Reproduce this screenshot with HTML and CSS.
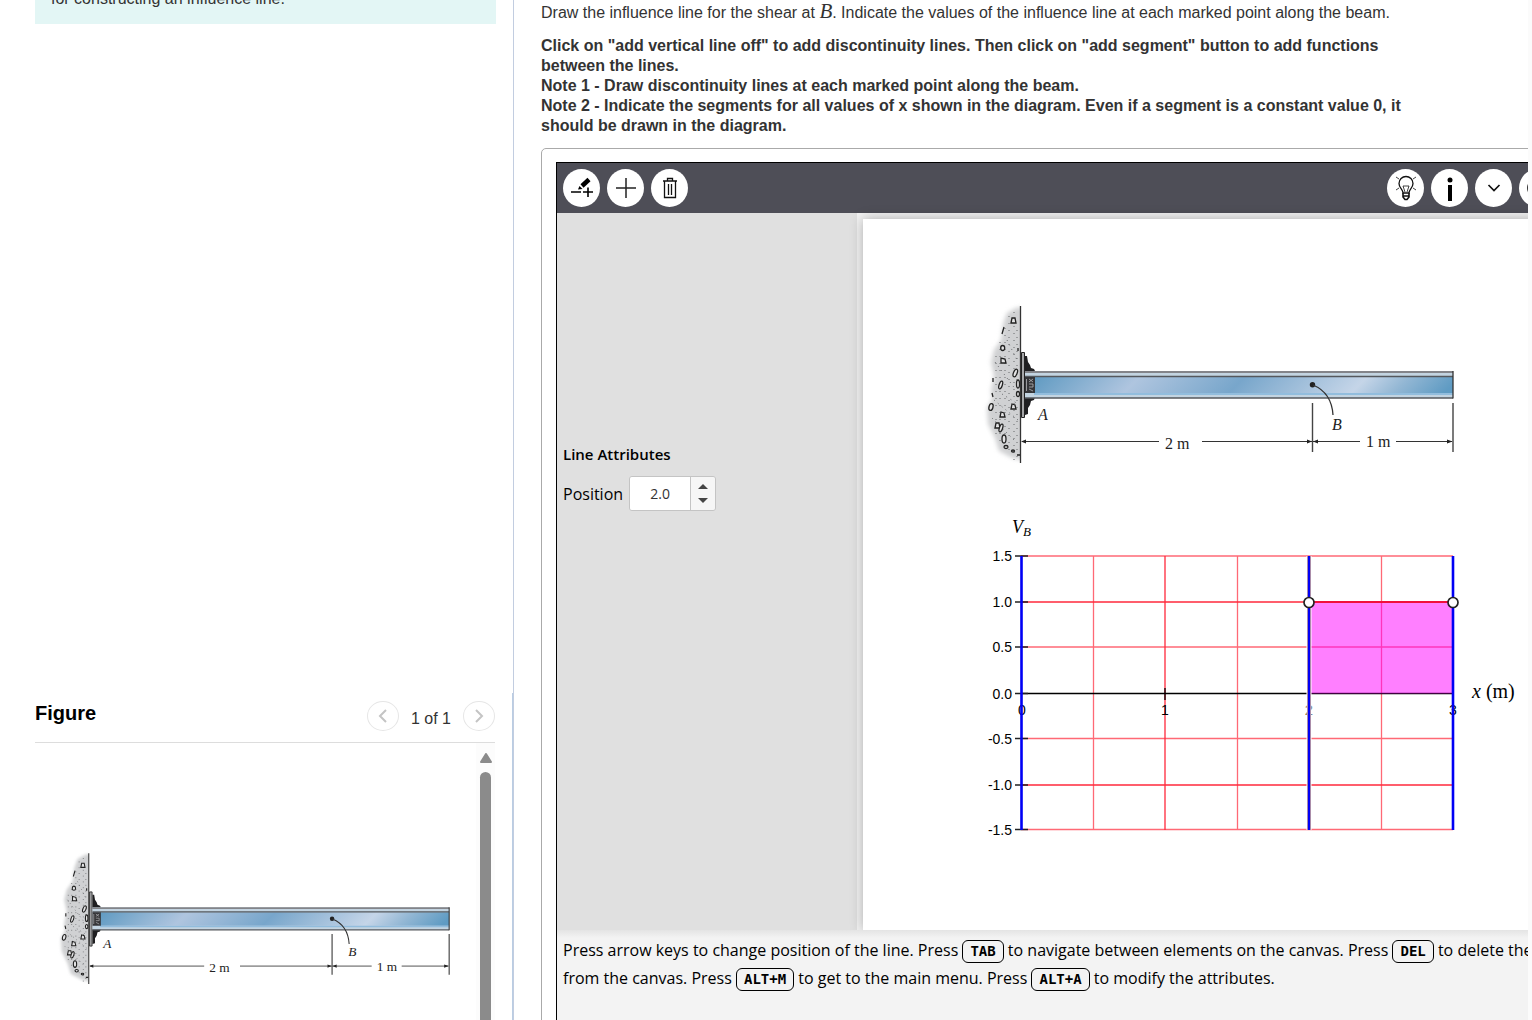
FILE: index.html
```html
<!DOCTYPE html>
<html lang="en">
<head>
    <meta charset="UTF-8">
    <title>Influence Lines</title>
    <link rel="stylesheet" href="styles.css">
</head>
<body>
    <!-- shared drawing of the beam, used in the figure and on the canvas -->
    <svg class="defs" width="0" height="0" aria-hidden="true">
        <defs>
            <linearGradient id="steel" gradientUnits="userSpaceOnUse" x1="50" y1="85" x2="261" y2="296">
                <stop offset="0" stop-color="#639cc3"/>
                <stop offset="0.24" stop-color="#afc5df"/>
                <stop offset="0.49" stop-color="#78a6cb"/>
                <stop offset="0.78" stop-color="#c5d5e8"/>
                <stop offset="0.88" stop-color="#93b7d4"/>
                <stop offset="1" stop-color="#5f9bc3"/>
            </linearGradient>
            <filter id="soft" x="-20%" y="-10%" width="140%" height="120%">
                <feGaussianBlur stdDeviation="2"/>
            </filter>
            <clipPath id="wallClip"><path d="M0 0H40V170H0Z"/></clipPath>
            <symbol id="beam" viewBox="0 0 480 170">
                <g clip-path="url(#wallClip)">
                    <path filter="url(#soft)" fill="#d0d1d3" d="M50 6 L36 8 L27 13 L23 24 L21 40 L14 50 L11 62 L14 76 L11 90 L12 99 L7 108 L8 124 L15 138 L19 151 L32 158 L50 162Z"/>
                </g>
                <g fill="none" stroke="#66686b" stroke-width="1" stroke-dasharray="1 6">
                    <path d="M34 12V160M29 16V155M37 30V158M25 28V152M20 42V146M16 56V138"/>
                    <path d="M27 40L38 62M15 62L36 90M14 100L38 120M12 118L34 140M22 94L38 104" stroke-dasharray="1 4"/>
                </g>
                <g fill="#e4e4e5" stroke="#222" stroke-width="1.3">
                    <path d="M31 23L32 18L35 18L36 23ZM21 63L21 58L25 59L26 63ZM31 109L32 104L35 105L36 109ZM20 117L21 112L24 113L25 117ZM15 128L16 123L19 123L20 128Z"/>
                    <ellipse cx="22.700" cy="48" rx="2" ry="2.500"/>
                    <ellipse cx="35.300" cy="73" rx="1.800" ry="4" transform="rotate(22 35.300 73)"/>
                    <ellipse cx="20.700" cy="85" rx="1.600" ry="4" transform="rotate(18 20.700 85)"/>
                    <ellipse cx="38" cy="84" rx="1.500" ry="4"/>
                    <ellipse cx="38" cy="94" rx="1.500" ry="2.500"/>
                    <ellipse cx="11" cy="107" rx="2" ry="3.500" transform="rotate(14 11 107)"/>
                    <ellipse cx="21" cy="128" rx="1.600" ry="4" transform="rotate(18 21 128)"/>
                    <ellipse cx="24" cy="139" rx="2" ry="4"/>
                    <ellipse cx="26" cy="147" rx="2" ry="1.500"/>
                    <ellipse cx="33" cy="151" rx="1.500" ry="1"/>
                    <path d="M24 27L22 34M13 78V82M12 93L13 97M38 48V51M37 155H40"/>
                </g>
                <path d="M40.500 6V163" stroke="#333" stroke-width="1.300"/>
                <path d="M41.500 52.500H44.500V117.500H41.500Z" fill="#a5a6a8" stroke="#222"/>
                <path fill="#1f1f21" d="M45 56L47 56L48 62L50 65L51 68L54 69L56 73H45ZM45 97H55L54 100L51 101L50 105L48 108L48 114L45 115Z"/>
                <path d="M45 71H473V98H45Z" fill="#c3d4e1"/>
                <path d="M54 77H473V93H54Z" fill="url(#steel)"/>
                <path d="M54 93H473V95H54Z" fill="#92bddd"/>
                <path d="M45 72H473" stroke="#838489" stroke-width="2"/>
                <path d="M45 76.500H473M45 98H473" stroke="#55585d" stroke-width="1.500"/>
                <path d="M473 71V98.500" stroke="#333" stroke-width="1.300"/>
                <path d="M45 77H55V93H45Z" fill="#353538"/>
                <path d="M49 79L53 82M53 79L49 82M49 84H53V87H49M49 89L53 91M46.500 79V91" stroke="#b5b5b8" stroke-width="0.800" fill="none"/>
                <circle cx="332.500" cy="84.700" r="2.700" fill="#222"/>
                <path d="M333 85C345 90 352 99 353 115" fill="none" stroke="#333" stroke-width="1.300"/>
                <path d="M332.500 103V152M473 103V152" stroke="#444" stroke-width="1.400"/>
                <path d="M42 141.500H179M222 141.500H332M333 141.500H380M416 141.500H472" stroke="#333"/>
                <path fill="#222" d="M41 141.500L46 139.500V143.500ZM332 141.500L327 139.500V143.500ZM333 141.500L338 139.500V143.500ZM472.500 141.500L467 139.500V143.500Z"/>
            </symbol>
        </defs>
    </svg>

    <aside class="left">
        <div class="hint">for constructing an influence line.</div>
        <section class="figure">
            <header class="figure-head">
                <h2>Figure</h2>
                <nav class="pager">
                    <button type="button" aria-label="Previous figure"><svg width="10" height="14" viewBox="0 0 10 14"><path d="M8 1L2 7L8 13"/></svg></button>
                    <span>1 of 1</span>
                    <button type="button" aria-label="Next figure"><svg width="10" height="14" viewBox="0 0 10 14"><path d="M2 1L8 7L2 13"/></svg></button>
                </nav>
            </header>
            <div class="figure-body">
                <svg class="beam-small" viewBox="0 0 480 170">
                    <use href="#beam" width="480" height="170"/>
                    <g class="beam-text">
                        <text class="it" x="58" y="120">A</text>
                        <text class="it" x="352" y="130">B</text>
                        <text x="185" y="149">2 m</text>
                        <text x="386" y="147">1 m</text>
                    </g>
                </svg>
                <div class="scrollbar">
                    <svg width="14" height="10" viewBox="0 0 14 10"><path d="M7 1L12 9H2Z" fill="#8b8b8b" stroke="#8b8b8b" stroke-width="2" stroke-linejoin="round"/></svg>
                    <div class="thumb"></div>
                </div>
            </div>
        </section>
    </aside>

    <main class="right">
        <p class="task">Draw the influence line for the shear at <i class="math">B</i>. Indicate the values of the influence line at each marked point along the beam.</p>
        <p class="notes">Click on "add vertical line off" to add discontinuity lines. Then click on "add segment" button to add functions<br>between the lines.<br>
        Note 1 - Draw discontinuity lines at each marked point along the beam.<br>
        Note 2 - Indicate the segments for all values of x shown in the diagram. Even if a segment is a constant value 0, it<br>should be drawn in the diagram.</p>

        <div class="frame">
            <div class="applet">
                <div class="toolbar">
                    <button type="button" aria-label="Add vertical line">
                        <svg width="24" height="24" viewBox="0 0 24 24"><path d="M1 16H11M13 16H23M18 11.500V21" stroke="#000" stroke-width="1.6"/><path d="M8 13.500L9.500 10L12.500 13Z" fill="#000"/><path d="M12 10L19 3.500" stroke="#000" stroke-width="4.500"/></svg>
                    </button>
                    <button type="button" aria-label="Add segment">
                        <svg width="22" height="22" viewBox="0 0 22 22"><path d="M1 11H21M11 1V21" stroke="#222" stroke-width="1.5"/></svg>
                    </button>
                    <button type="button" aria-label="Delete">
                        <svg width="16" height="22" viewBox="0 0 16 22"><path d="M1 4H15M2.500 4V20.500H13.500V4M5.500 3.500V1.500H10.500V3.500M6.500 7V18M9.500 7V18" fill="none" stroke="#111" stroke-width="1.3"/></svg>
                    </button>
                    <span class="space"></span>
                    <button type="button" aria-label="Hint">
                        <svg width="22" height="26" viewBox="0 0 22 26" fill="none" stroke="#111"><path d="M8 18C8 14 4 13 4 8.500A7 7 0 0 1 18 8.500C18 13 14 14 14 18Z" stroke-width="1.3"/><path d="M8 18V22L10 24.500H12L14 22V18M8 21H14" stroke-width="1.6"/><path d="M8 11H14L12 17M8 11L10 17M1 2L4 4M21 2L18 4M1 15L4 13M21 15L18 13" stroke-width="0.8"/></svg>
                    </button>
                    <button type="button" aria-label="Information">
                        <svg width="8" height="26" viewBox="0 0 8 26"><circle cx="4" cy="5" r="2.500"/><path d="M2 10H6V26H2Z"/></svg>
                    </button>
                    <button type="button" aria-label="More">
                        <svg width="14" height="10" viewBox="0 0 14 10"><path d="M1.500 2L7 7.500L12.500 2" fill="none" stroke="#111" stroke-width="1.7"/></svg>
                    </button>
                    <button type="button" aria-label="Help">
                        <svg width="22" height="22" viewBox="0 0 22 22"><circle cx="11" cy="11" r="10" fill="none" stroke="#111" stroke-width="1.7"/></svg>
                    </button>
                </div>

                <div class="work">
                    <form class="attributes">
                        <h3>Line Attributes</h3>
                        <div class="field">
                            <label for="position">Position</label>
                            <div class="spinner">
                                <input type="text" id="position" value="2.0">
                                <div class="steps">
                                    <button type="button" aria-label="Increase"><svg width="10" height="5" viewBox="0 0 10 5"><path d="M0 5L5 0L10 5Z"/></svg></button>
                                    <button type="button" aria-label="Decrease"><svg width="10" height="5" viewBox="0 0 10 5"><path d="M0 0L5 5L10 0Z"/></svg></button>
                                </div>
                            </div>
                        </div>
                    </form>

                    <div class="canvas">
                        <svg class="beam-large" viewBox="0 0 480 170">
                            <use href="#beam" width="480" height="170"/>
                            <g class="beam-text">
                                <text class="it" x="58" y="120">A</text>
                                <text class="it" x="352" y="130">B</text>
                                <text x="185" y="149">2 m</text>
                                <text x="386" y="147">1 m</text>
                            </g>
                        </svg>

                        <svg class="graph" viewBox="0 0 560 340">
                            <text class="math-label" x="32" y="23">V<tspan class="sub" dy="3">B</tspan></text>
                            <!-- grid -->
                            <g stroke="#ff2a3c" stroke-width="1.300">
                                <path d="M185 46V320M41 92H473M41 275H473"/>
                                <path opacity="0.700" d="M113.500 46V320M257.500 46V320M401.500 46V320M41 46H473M41 137H473M41 228.500H473M41 319.500H473"/>
                            </g>
                            <!-- axes -->
                            <path d="M41 183.500H473M185 178V190" stroke="#000" stroke-width="1.300"/>
                            <path d="M35 46H48M35 92H48M35 137H48M35 183.500H48M35 228.500H48M35 275H48M35 319.500H48" stroke="#222" stroke-width="1.300"/>
                            <g class="ticks-y">
                                <text x="32" y="51">1.5</text>
                                <text x="32" y="97">1.0</text>
                                <text x="32" y="142">0.5</text>
                                <text x="32" y="189">0.0</text>
                                <text x="32" y="234">-0.5</text>
                                <text x="32" y="280">-1.0</text>
                                <text x="32" y="325">-1.5</text>
                            </g>
                            <g class="ticks-x">
                                <text x="42" y="205">0</text>
                                <text x="185" y="205">1</text>
                                <text x="329" y="205">2</text>
                                <text x="473" y="205">3</text>
                            </g>
                            <text class="math-label axis" x="492" y="188">x <tspan class="up">(m)</tspan></text>
                            <!-- segment -->
                            <path d="M329 92H473V183.500H329Z" fill="#ff00ff" fill-opacity="0.5"/>
                            <path d="M329 92H473" stroke="#f0103c" stroke-width="2"/>
                            <!-- vertical lines -->
                            <path d="M329 46V320" stroke="#fff" stroke-width="5"/>
                            <path d="M329 46V320" stroke="#f3c98b" stroke-width="4"/>
                            <path d="M41.500 46V320M329 46V320M473 46V320" stroke="#0000f5" stroke-width="2.600"/>
                            <g fill="#fff" stroke="#222" stroke-width="1.700">
                                <circle cx="329" cy="92.500" r="5"/>
                                <circle cx="473" cy="92.500" r="5"/>
                            </g>
                        </svg>
                    </div>
                </div>

                <p class="help">Press arrow keys to change position of the line. Press <kbd>TAB</kbd> to navigate between elements on the canvas. Press <kbd>DEL</kbd> to delete the<br>from the canvas. Press <kbd>ALT+M</kbd> to get to the main menu. Press <kbd>ALT+A</kbd> to modify the attributes.</p>
            </div>
        </div>
    </main>
</body>
</html>
```
FILE: styles.css
```css
* {
    box-sizing: border-box;
}
body {
    margin: 0;
    display: flex;
    height: 100vh;
    overflow: hidden;
    background: #fff;
    color: #333;
    font-family: "Liberation Sans", Arial, sans-serif;
    font-size: 16px;
    line-height: 20px;
}
p, h2, h3 {
    margin: 0;
}
button {
    padding: 0;
    border: none;
    cursor: pointer;
}
.defs {
    position: absolute;
}

/* left column */
.left {
    flex: 0 0 514px;
    display: flex;
    flex-direction: column;
    justify-content: space-between;
    border-right: 1px solid #c2cde0;
}
.hint {
    margin: -11px 17px 0 35px;
    padding: 0 16px 15px;
    background: #e3f6f5;
}
.figure {
    padding: 0 17px 0 35px;
    border-right: 1px solid #bacde3;
}
.figure-head {
    display: flex;
    justify-content: space-between;
    height: 50px;
    padding-top: 8px;
    border-bottom: 1px solid #ddd;
}
.figure-head h2 {
    padding-top: 2px;
    color: #000;
    font-size: 20px;
}
.pager {
    display: flex;
    gap: 12px;
}
.pager span {
    padding-top: 8px;
}
.pager button {
    display: flex;
    align-items: center;
    justify-content: center;
    width: 32px;
    height: 30px;
    border: 1px solid #e6e6e6;
    border-radius: 50%;
    background: #fff;
}
.pager path {
    fill: none;
    stroke: #c4c4c4;
    stroke-width: 2;
}
.figure-body {
    display: flex;
    justify-content: space-between;
    height: 277px;
    padding-left: 20px;
}
.beam-small {
    width: 400px;
    height: 142px;
    margin-top: 105px;
}
.scrollbar {
    display: flex;
    flex-direction: column;
    align-items: center;
    gap: 9px;
    width: 19px;
    padding-top: 10px;
    background: #fcfcfc;
}
.thumb {
    flex: 1;
    width: 11px;
    border-radius: 6px 6px 0 0;
    background: #8b8b8b;
}
.beam-text {
    fill: #222;
    font-family: "Liberation Serif", serif;
    font-size: 16px;
}
.it {
    font-style: italic;
}

/* right column */
.right {
    flex: 1;
    min-width: 0;
    overflow: hidden;
    padding: 3px 0 0 27px;
    border-right: 4px solid #fbfbfb;
}
.task {
    height: 20px;
    white-space: nowrap;
}
.math {
    font-family: "Liberation Serif", serif;
    font-size: 21px;
    line-height: 16px;
}
.notes {
    margin: 13px 0 12px;
    font-weight: bold;
    white-space: nowrap;
}
.frame {
    width: calc(100% + 50px);
    padding: 13px 14px;
    border: 1px solid #aaa;
    border-radius: 5px;
}
.applet {
    border: 1px solid #000;
    background: #f3f3f3;
    color: #000;
    font-family: "Open Sans", "Segoe UI", sans-serif;
    font-size: 16px;
}
.toolbar {
    display: flex;
    align-items: center;
    gap: 7px;
    height: 50px;
    padding: 0 6px;
    background: #4e4e57;
}
.toolbar button {
    display: flex;
    align-items: center;
    justify-content: center;
    width: 37px;
    height: 38px;
    border-radius: 50%;
    background: #fff;
}
.space {
    flex: 1;
}
.work {
    display: flex;
    gap: 6px;
}
.attributes {
    flex: 0 0 300px;
    display: flex;
    flex-direction: column;
    justify-content: center;
    gap: 10px;
    padding: 0 6px 190px;
    background: #e0e0e0;
}
.attributes h3 {
    font-size: 15px;
    font-weight: 600;
    line-height: 24px;
}
.field {
    display: flex;
    align-items: center;
    gap: 6px;
}
.spinner {
    display: flex;
    height: 35px;
    border: 1px solid #c4c4c4;
    border-radius: 3px;
    overflow: hidden;
}
.spinner input {
    width: 60px;
    padding: 0;
    border: none;
    color: #333;
    font-family: inherit;
    font-size: 14px;
    text-align: center;
}
.steps {
    display: flex;
    flex-direction: column;
    justify-content: center;
    width: 25px;
    border-left: 1px solid #c4c4c4;
    background: #f6f6f6;
}
.steps button {
    display: flex;
    align-items: center;
    justify-content: center;
    height: 14px;
    background: none;
}
.steps svg {
    fill: #444;
}
.canvas {
    flex: 1;
    display: flex;
    flex-direction: column;
    gap: 40px;
    margin-top: 6px;
    padding: 81px 0 80px 117px;
    background: #fff;
    box-shadow: 0 0 12px rgba(0, 0, 0, 0.3);
}
.beam-large {
    width: 480px;
    height: 170px;
}
.graph {
    width: 560px;
    height: 340px;
}
.ticks-y text, .ticks-x text {
    fill: #000;
    font-family: "Liberation Sans", Arial, sans-serif;
    font-size: 14px;
}
.ticks-y text {
    text-anchor: end;
}
.ticks-x text {
    text-anchor: middle;
}
.math-label {
    font-family: "Liberation Serif", serif;
    font-size: 18px;
    font-style: italic;
}
.axis {
    font-size: 20px;
}
.sub {
    font-size: 13px;
}
.up {
    font-style: normal;
}
.help {
    position: relative;
    height: 120px;
    padding: 6px;
    background: linear-gradient(#e4e4e4, #f3f3f3 8px);
    line-height: 28px;
    white-space: nowrap;
}
kbd {
    display: inline-block;
    height: 23px;
    padding: 0 7px;
    border: 1px solid #000;
    border-radius: 6px;
    font-family: "DejaVu Sans Mono", monospace;
    font-size: 14px;
    font-weight: bold;
    line-height: 21px;
}
```
